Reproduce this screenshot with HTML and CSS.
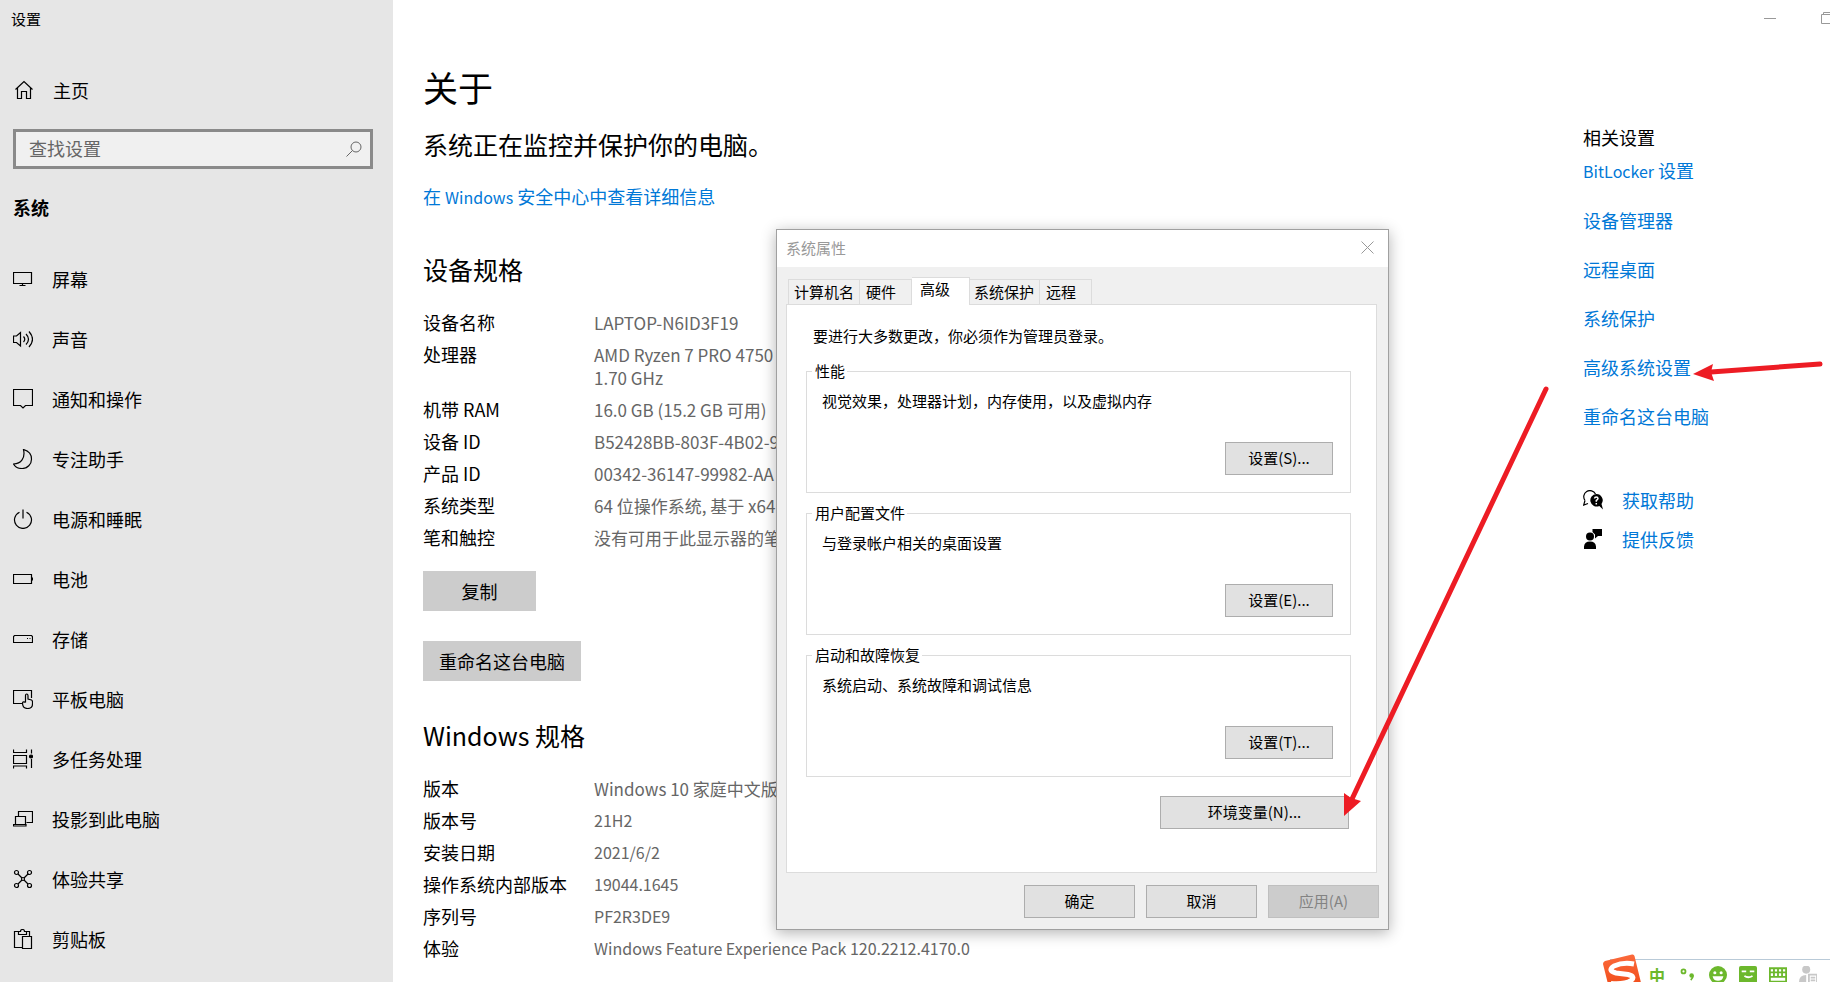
FILE: index.html
```html
<!DOCTYPE html>
<html lang="zh-CN">
<head>
    <meta charset="UTF-8">
    <meta name="viewport" content="width=device-width, initial-scale=1.0">
    <title>设置</title>
    <link rel="stylesheet" href="styles.css">
</head>
<body>
    <div class="settings">
        <aside class="sidebar">
            <div class="app-title">设置</div>
            <a class="home" href="#">
                <svg class="icon" viewBox="0 0 20 20"><path d="M1.500 9.500 10 1.500l8.500 8M3.500 8v10.500h4v-7h5v7h4V8"/></svg>
                <span>主页</span>
            </a>
            <div class="search">
                <input type="text" id="searchInput" aria-label="查找设置" placeholder="查找设置" autocomplete="off">
                <svg class="search-icon" viewBox="0 0 16 16"><circle cx="10" cy="6" r="5"/><path d="M6.500 9.500.5 15.500"/></svg>
            </div>
            <h2 class="section-title">系统</h2>
            <nav class="nav">
                <a class="nav-item" href="#">
                    <svg class="icon" viewBox="0 0 20 20"><path d="M.5 3.500h18v11H.5zM9.500 14.500v2M6.500 16.500h6"/></svg>
                    <span>屏幕</span>
                </a>
                <a class="nav-item" href="#">
                    <svg class="icon" viewBox="0 0 20 20"><path d="M.5 7v6.500h3l4 3.500V3.500L3.500 7zM10.500 7.500q2.500 2.700 0 5.500M13 5q5 5.200 0 10.500M16 2.500q7 7.700 0 15.500"/></svg>
                    <span>声音</span>
                </a>
                <a class="nav-item" href="#">
                    <svg class="icon" viewBox="0 0 20 20"><path d="M.5.500h19v16h-7L10 19l-2.500-2.500h-7z"/></svg>
                    <span>通知和操作</span>
                </a>
                <a class="nav-item" href="#">
                    <svg class="icon" viewBox="0 0 20 20"><path d="M10.500.500c5 1.500 8 5 8 9.500a9.300 9.300 0 0 1-9.500 9.500c-4 0-7-1.500-8.500-4.500C8 15 12.500 9 10.500.5z"/></svg>
                    <span>专注助手</span>
                </a>
                <a class="nav-item" href="#">
                    <svg class="icon" viewBox="0 0 20 20"><path d="M10 .5v9M6.500 3.200a8.500 8.500 0 1 0 7 0"/></svg>
                    <span>电源和睡眠</span>
                </a>
                <a class="nav-item" href="#">
                    <svg class="icon" viewBox="0 0 20 20"><path d="M.5 5.500h18v9H.5zM19.500 8.500v3"/></svg>
                    <span>电池</span>
                </a>
                <a class="nav-item" href="#">
                    <svg class="icon" viewBox="0 0 20 20"><path d="M.5 13.500v-6l1-1h17l1 1v6zM14 9.500h1M16.500 9.500h1"/></svg>
                    <span>存储</span>
                </a>
                <a class="nav-item" href="#">
                    <svg class="icon" viewBox="0 0 20 20"><path d="M9 14.500H.5v-13h18V9M12.500 13.500V6.500q0-1.500 1.200-1.500t1.300 1.500V10l3.500 1q1 .500 1 2v2q0 4.500-5 4.500c-3.500 0-5-2-5-5.500 0-1.200 2-1.500 3-.5"/></svg>
                    <span>平板电脑</span>
                </a>
                <a class="nav-item" href="#">
                    <svg class="icon" viewBox="0 0 20 20"><path d="M.5.500v3h13v-3M.5 6.500h13v8H.5zM.5 19.500v-2.500h13v2.500M18.500.5v4M18.500 10v9"/><circle class="solid" cx="18" cy="7.500" r="1.500"/></svg>
                    <span>多任务处理</span>
                </a>
                <a class="nav-item" href="#">
                    <svg class="icon" viewBox="0 0 20 20"><path d="M5.500 8V2.500h14v11h-6M2.500 7.500h10v8h-10zM.5 15.500h12.500v1.500H.5z"/></svg>
                    <span>投影到此电脑</span>
                </a>
                <a class="nav-item" href="#">
                    <svg class="icon" viewBox="0 0 20 20"><circle cx="3.500" cy="3.500" r="2"/><circle cx="16.500" cy="3.500" r="2"/><circle cx="3.500" cy="16.500" r="2"/><circle cx="16.500" cy="16.500" r="2"/><circle cx="10" cy="10" r="1.500"/><path d="m5 5 4 4M15 5l-4 4M5 15l4-4M15 15l-4-4"/></svg>
                    <span>体验共享</span>
                </a>
                <a class="nav-item" href="#">
                    <svg class="icon" viewBox="0 0 20 20"><path d="M9 18.500H1.500v-16h4M13.500 2.500h3V7M5.500 5.500v-3h2q0-2 2-2t2 2h2v3zM9.500 7.500h9v12h-9z"/></svg>
                    <span>剪贴板</span>
                </a>
            </nav>
        </aside>

        <main class="content">
            <h1>关于</h1>
            <p class="status">系统正在监控并保护你的电脑。</p>
            <a class="link" href="#">在 <span class="latin">Windows</span> 安全中心中查看详细信息</a>

            <h2>设备规格</h2>
            <dl class="specs">
                <dt>设备名称</dt><dd>LAPTOP-N6ID3F19</dd>
                <dt>处理器</dt><dd>AMD Ryzen 7 PRO 4750<br>1.70 GHz</dd>
                <dt>机带 RAM</dt><dd>16.0 GB (15.2 GB 可用)</dd>
                <dt>设备 ID</dt><dd>B52428BB-803F-4B02-9</dd>
                <dt>产品 ID</dt><dd>00342-36147-99982-AA</dd>
                <dt>系统类型</dt><dd>64 位操作系统, 基于 x64</dd>
                <dt>笔和触控</dt><dd>没有可用于此显示器的笔</dd>
            </dl>
            <div class="actions">
                <button class="button button-copy" type="button">复制</button>
                <button class="button" type="button">重命名这台电脑</button>
            </div>

            <h2>Windows 规格</h2>
            <dl class="specs">
                <dt>版本</dt><dd>Windows 10 家庭中文版</dd>
                <dt>版本号</dt><dd class="latin">21H2</dd>
                <dt>安装日期</dt><dd class="latin">2021/6/2</dd>
                <dt>操作系统内部版本</dt><dd class="latin">19044.1645</dd>
                <dt>序列号</dt><dd class="latin">PF2R3DE9</dd>
                <dt>体验</dt><dd class="latin">Windows Feature Experience Pack 120.2212.4170.0</dd>
            </dl>
        </main>

        <aside class="related">
            <h3>相关设置</h3>
            <ul class="related-links">
                <li><a class="link" href="#"><span class="latin">BitLocker</span> 设置</a></li>
                <li><a class="link" href="#">设备管理器</a></li>
                <li><a class="link" href="#">远程桌面</a></li>
                <li><a class="link" href="#">系统保护</a></li>
                <li><a class="link" href="#">高级系统设置</a></li>
                <li><a class="link" href="#">重命名这台电脑</a></li>
            </ul>
            <ul class="support">
                <li>
                    <svg class="icon" viewBox="0 0 20 20"><path d="M2 10.500A6.200 6.200 0 1 1 12.500 4M2 10.500.700 15l4.300-1.500"/><path class="fill" d="M13.300 4a6.300 6.300 0 1 0 3 12l3.700 3.500-1.500-5.500a6.300 6.300 0 0 0-5.200-10z"/><path class="cut" d="M11.500 8.500q.2-1.500 1.800-1.500t1.700 1.500q0 1-1.700 2v1.300M13.300 13v1.500"/></svg>
                    <a class="link" href="#">获取帮助</a>
                </li>
                <li>
                    <svg class="icon" viewBox="0 0 20 20"><circle class="fill" cx="7" cy="7.500" r="4"/><path class="fill" d="M1 20v-2.500Q1.500 12.500 7 12.500t6 5V20zM9.500 0H19v7h-4l-3 2.500V5.500L9.500 3z"/></svg>
                    <a class="link" href="#">提供反馈</a>
                </li>
            </ul>
        </aside>
    </div>

    <div class="window-controls">
        <button type="button" aria-label="最小化"><svg width="12" height="12" viewBox="0 0 12 12"><path d="M0 6.500h12"/></svg></button>
        <button type="button" aria-label="还原"><svg width="14" height="12" viewBox="0 0 14 12"><path d="M.5 2.500h10v9H.5zM2.500 2.500v-2h10v9h-2"/></svg></button>
    </div>

    <div class="dialog" role="dialog" aria-labelledby="dialogTitle">
        <div class="dialog-header">
            <span id="dialogTitle">系统属性</span>
            <button class="dialog-close" type="button" aria-label="关闭"><svg width="13" height="13" viewBox="0 0 13 13"><path d="m.5.500 12 12M12.500.500l-12 12"/></svg></button>
        </div>
        <div class="tabs" role="tablist">
            <button class="tab" type="button" role="tab">计算机名</button>
            <button class="tab" type="button" role="tab">硬件</button>
            <button class="tab active" type="button" role="tab" aria-selected="true">高级</button>
            <button class="tab" type="button" role="tab">系统保护</button>
            <button class="tab" type="button" role="tab">远程</button>
        </div>
        <div class="panel">
            <p class="note">要进行大多数更改，你必须作为管理员登录。</p>
            <fieldset>
                <legend>性能</legend>
                <p>视觉效果，处理器计划，内存使用，以及虚拟内存</p>
                <button class="dialog-button" type="button">设置(S)...</button>
            </fieldset>
            <fieldset>
                <legend>用户配置文件</legend>
                <p>与登录帐户相关的桌面设置</p>
                <button class="dialog-button" type="button">设置(E)...</button>
            </fieldset>
            <fieldset>
                <legend>启动和故障恢复</legend>
                <p>系统启动、系统故障和调试信息</p>
                <button class="dialog-button" type="button">设置(T)...</button>
            </fieldset>
            <button class="dialog-button button-env" type="button">环境变量(N)...</button>
        </div>
        <div class="dialog-footer">
            <button class="dialog-button" type="button">确定</button>
            <button class="dialog-button" type="button">取消</button>
            <button class="dialog-button" type="button" disabled>应用(A)</button>
        </div>
    </div>

    <!-- input method bar -->
    <div class="ime">
        <svg class="ime-logo" viewBox="0 0 42 42">
            <defs><linearGradient id="logoFill" x1="0" y1="0" x2="0" y2="1"><stop offset="0" stop-color="#fb6a3c"/><stop offset="1" stop-color="#ee4410"/></linearGradient></defs>
            <path fill="url(#logoFill)" d="M3 7 30 .500q2-.500 2.500 1.500L41 37q0 2-2 2.500L11 42q-2 0-2.500-2L1 10q0-2 2-3z"/>
            <path class="logo-mark" d="M32 10Q21 8 12 12q-7 4.500 2 7l12 1.500q8 2 3 6-6 4-20 3"/>
        </svg>
        <span class="ime-lang">中</span>
        <svg class="ime-icon" viewBox="0 0 20 20"><circle cx="5" cy="6" r="2.200"/><circle class="dot" cx="14" cy="10.500" r="2.500"/><path d="M15.500 10.500q0 3-2.500 5"/></svg>
        <svg class="ime-icon" viewBox="0 0 20 20"><circle class="dot" cx="10" cy="10" r="10"/><circle class="hole" cx="6.500" cy="7.500" r="1.700"/><circle class="hole" cx="13.500" cy="7.500" r="1.700"/><path class="hole" d="M4 11.500h12q-1 5-6 5t-6-5z"/></svg>
        <svg class="ime-icon" viewBox="0 0 20 20"><rect class="dot" x="0" y="0" width="20" height="19" rx="2"/><path class="cutline" d="M3 6h5M12 6h5M6 11q4 3 9 0"/></svg>
        <svg class="ime-icon" viewBox="0 0 20 20"><path d="M1 2.500h18v15H1zM1 7h18M1 12h18M5.500 3v9M10 3v9M14.500 3v9"/></svg>
        <svg class="ime-icon gray" viewBox="0 0 20 20"><circle class="dot" cx="8" cy="4" r="4.500"/><path class="dot" d="M0 18q0-8 8-8v8z"/><path d="M11 20V9.500h9M20 9.500V20M13 13h5M13 16h5"/></svg>
        <svg class="ime-icon" viewBox="0 0 20 20"><path class="dot" d="M2 1h6v6H2z"/></svg>
    </div>

    <!-- pointer arrows -->
    <svg class="arrows" width="1830" height="982" viewBox="0 0 1830 982">
        <path class="shaft" d="M1820 364 1711 372M1546 389 1352 799"/>
        <path class="head" d="m1693 374 20-10-2 8 3 9zM1344 816v-23l7 5 10 3z"/>
    </svg>
</body>
</html>
```
FILE: styles.css
```css
* {
    box-sizing: border-box;
}
body {
    margin: 0;
    height: 100vh;
    overflow: hidden;
    position: relative;
    font-family: "Noto Sans CJK SC", sans-serif;
    font-size: 18px;
    line-height: 24px;
    color: #000;
    background: #fff;
}
h1, h2, h3, p, ul, dl, dd {
    margin: 0;
    padding: 0;
    font-size: inherit;
    font-weight: normal;
}
ul {
    list-style: none;
}
button, input {
    font: inherit;
    color: inherit;
}
a {
    color: inherit;
    text-decoration: none;
}
.settings {
    display: grid;
    grid-template-columns: 393px 1fr 247px;
    height: 100%;
}
.link {
    color: #0078d7;
}
.icon {
    flex: none;
    width: 20px;
    height: 20px;
    fill: none;
    stroke: #000;
    stroke-width: 1.2;
}
.icon .solid {
    fill: #000;
}
.icon .fill {
    fill: #000;
    stroke: none;
}
.icon .cut {
    stroke: #fff;
    stroke-width: 1.5;
}

/* sidebar */
.sidebar {
    padding-top: 9px;
    background: #e6e6e6;
    overflow: hidden;
}
.app-title {
    padding-left: 11px;
    font-size: 15px;
    line-height: 20px;
}
.home {
    display: flex;
    align-items: center;
    gap: 19px;
    height: 40px;
    margin: 41px 0 19px;
    padding-left: 14px;
}
.search {
    position: relative;
    margin: 0 20px 0 13px;
}
.search input {
    display: block;
    width: 100%;
    height: 40px;
    padding: 0 40px 2px 13px;
    border: 3px solid #8a8a8a;
    border-radius: 0;
    background: #f0f0f0;
    outline: none;
}
.search input::placeholder {
    color: #666;
}
.search-icon {
    position: absolute;
    top: 12px;
    right: 11px;
    width: 16px;
    height: 16px;
    fill: none;
    stroke: #666;
}
.section-title {
    margin: 26px 0 30px;
    padding-left: 13px;
    font-weight: bold;
}
.nav-item {
    display: flex;
    align-items: center;
    gap: 19px;
    height: 60px;
    padding-left: 13px;
}

/* about page */
.content {
    padding: 63px 0 0 30px;
}
.content h1 {
    font-size: 35px;
    line-height: 48px;
}
.status {
    margin: 17px 0 24px;
    font-size: 25px;
    line-height: 32px;
}
.content .link {
    display: block;
}
.latin,
.specs .latin {
    font-size: 16px;
}
.content h2 {
    margin: 44px 0 26px;
    font-size: 25px;
    line-height: 32px;
}
.specs {
    display: grid;
    grid-template-columns: 171px 1fr;
    row-gap: 9px;
    line-height: 23px;
}
.specs dd {
    font-size: 17px;
    color: #666;
}
.actions {
    display: flex;
    flex-direction: column;
    align-items: flex-start;
    gap: 30px;
    margin: 22px 0 38px;
}
.content .actions + h2 {
    margin-top: 0;
}
.button {
    height: 40px;
    padding: 0 16px 1px;
    border: none;
    background: #ccc;
}
.button-copy {
    width: 113px;
}

/* related settings */
.related {
    padding-top: 125px;
}
.related-links {
    display: grid;
    gap: 25px;
    margin: 9px 0 60px;
}
.support {
    display: grid;
    gap: 15px;
}
.support li {
    display: flex;
    align-items: center;
    gap: 19px;
}

.window-controls {
    position: absolute;
    top: 0;
    right: -27px;
    display: flex;
}
.window-controls button {
    width: 58px;
    height: 36px;
    padding: 0;
    border: none;
    background: none;
}
.window-controls svg {
    display: block;
    margin: auto;
    fill: none;
    stroke: #999;
}

/* system properties dialog */
.dialog {
    position: absolute;
    top: 229px;
    left: 776px;
    width: 613px;
    border: 1px solid #a0a0a0;
    background: #f0f0f0;
    box-shadow: 0 3px 14px rgba(0, 0, 0, 0.3);
    font-size: 15px;
    line-height: 20px;
}
.dialog-header {
    display: flex;
    align-items: center;
    justify-content: space-between;
    height: 37px;
    padding: 0 14px 2px 9px;
    background: #fff;
    color: #999;
}
.dialog-close {
    height: 13px;
    padding: 0;
    border: none;
    background: none;
}
.dialog-close svg {
    display: block;
    fill: none;
    stroke: #999;
}
.tabs {
    display: flex;
    align-items: flex-end;
    margin: 10px 0 0 11px;
}
.tab {
    height: 25px;
    padding: 0 15px 0 6px;
    border: 1px solid #dcdcdc;
    border-width: 1px 1px 0 0;
    background: #f0f0f0;
}
.tab:first-child {
    padding: 0 5px;
    border-left-width: 1px;
}
.tab:nth-child(4) {
    padding: 0 5px 0 4px;
}
.tab.active {
    height: 28px;
    margin-bottom: -1px;
    padding: 0 19px 5px 8px;
    background: #fff;
    position: relative;
}
.panel {
    margin: 0 11px 0 9px;
    padding: 21px 25px 43px 19px;
    border: 1px solid #dcdcdc;
    background: #fff;
}
.note {
    margin: 0 0 15px 7px;
}
fieldset {
    display: flex;
    flex-direction: column;
    align-items: flex-start;
    min-width: 0;
    margin: 0 0 10px;
    padding: 10px 17px 17px 15px;
    border: 1px solid #dcdcdc;
}
legend {
    margin-left: -10px;
    padding: 0 2px 0 3px;
}
.dialog-button {
    height: 33px;
    width: 111px;
    padding: 0 0 2px;
    border: 1px solid #adadad;
    background: #e1e1e1;
}
.dialog-button:disabled {
    border-color: #bfbfbf;
    background: #ccc;
    color: #838383;
}
fieldset .dialog-button {
    align-self: flex-end;
    width: 108px;
    margin-top: 31px;
}
.button-env {
    display: block;
    width: 189px;
    margin: 19px 2px 0 auto;
}
.dialog-footer {
    display: flex;
    justify-content: flex-end;
    gap: 11px;
    padding: 12px 9px 11px;
}

/* input method bar */
.ime {
    position: absolute;
    right: -16px;
    bottom: -7px;
    display: flex;
    align-items: center;
    gap: 12px;
    width: 236px;
    height: 30px;
    padding: 1px 0 0 39px;
    border-top: 1px solid #b9cad8;
    background: #fff;
}
.ime-logo {
    position: absolute;
    left: -8px;
    top: -6px;
    width: 42px;
    height: 42px;
}
.logo-mark {
    fill: none;
    stroke: #fff;
    stroke-width: 5;
}
.ime-lang {
    flex: none;
    width: 18px;
    color: #6cb82c;
    font-size: 16px;
    font-weight: bold;
    line-height: 14px;
}
.ime-icon {
    flex: none;
    width: 18px;
    height: 18px;
    fill: none;
    stroke: #6cb82c;
    stroke-width: 2;
}
.ime-icon .dot {
    fill: #6cb82c;
    stroke: none;
}
.ime-icon .hole {
    fill: #fff;
    stroke: none;
}
.ime-icon .cutline {
    stroke: #fff;
}
.ime-icon.gray {
    stroke: #c8c8c8;
}
.ime-icon.gray .dot {
    fill: #c8c8c8;
}

.arrows {
    position: absolute;
    top: 0;
    left: 0;
    pointer-events: none;
}
.shaft {
    fill: none;
    stroke: #ed1c24;
    stroke-width: 5;
    stroke-linecap: round;
}
.head {
    fill: #ed1c24;
}
```
